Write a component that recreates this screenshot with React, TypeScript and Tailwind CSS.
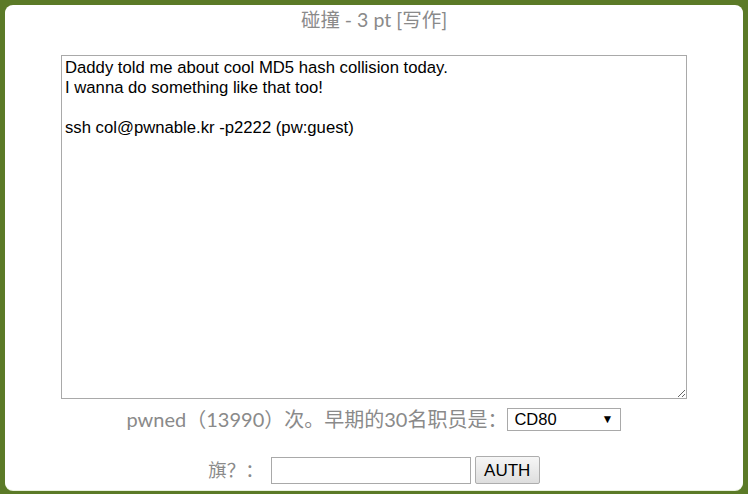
import React from 'react'

export default function App() {
  return (
    <div className="flex h-[494px] w-full flex-col bg-[#5b7a27] px-[5px] pb-[4px] pt-[5px]">
      <div className="flex flex-1 flex-col items-center rounded-[8px] bg-white shadow-[0_1px_0_#e9f2dc]">
        {/* title */}
        <div className="pt-[1px] font-['Lato','Noto_Sans_CJK_SC',sans-serif] text-[19.5px] leading-[27px] text-[#8a8a8a]">
          碰撞 - 3 pt [写作]
        </div>

        {/* description */}
        <textarea
          className="mt-[22px] h-[344px] w-[626px] resize border border-[#a9a9a9] bg-white px-[3px] py-[2px] font-['Liberation_Sans',Arial,sans-serif] text-[16.7px] leading-[20px] text-black outline-none"
          defaultValue={'Daddy told me about cool MD5 hash collision today.\nI wanna do something like that too!\n\nssh col@pwnable.kr -p2222 (pw:guest)'}
        />

        {/* pwned row */}
        <div className="mt-[8px] flex h-[24px] items-center">
          <span className="font-['Lato','Noto_Sans_CJK_SC',sans-serif] text-[20px] leading-[24px] text-[#8a8a8a]">
            pwned（13990）次。早期的30名职员是：
          </span>
          <div className="flex h-[23px] w-[114px] items-center justify-between border border-[#a9a9a9] bg-white pl-[6px] pr-[7px] font-['Liberation_Sans',Arial,sans-serif] text-[16.5px] text-black">
            <span>CD80</span>
            <span className="text-[12px]">▼</span>
          </div>
        </div>

        {/* flag row */}
        <div className="mt-[25px] flex items-center">
          <span className="mr-[7px] font-['Lato','Noto_Sans_CJK_SC',sans-serif] text-[18.5px] leading-[24px] text-[#8a8a8a]">
            旗？：
          </span>
          <input
            type="text"
            className="h-[27px] w-[200px] border border-[#a9a9a9] bg-white px-[3px] font-['Liberation_Sans',Arial,sans-serif] text-[14px] outline-none"
          />
          <button
            type="button"
            className="ml-[4px] h-[28px] w-[65px] rounded-[2px] border border-[#adadad] bg-gradient-to-b from-[#f6f6f6] to-[#dedede] font-['Liberation_Sans',Arial,sans-serif] text-[17px] leading-none text-black"
          >
            AUTH
          </button>
        </div>
      </div>
    </div>
  )
}
